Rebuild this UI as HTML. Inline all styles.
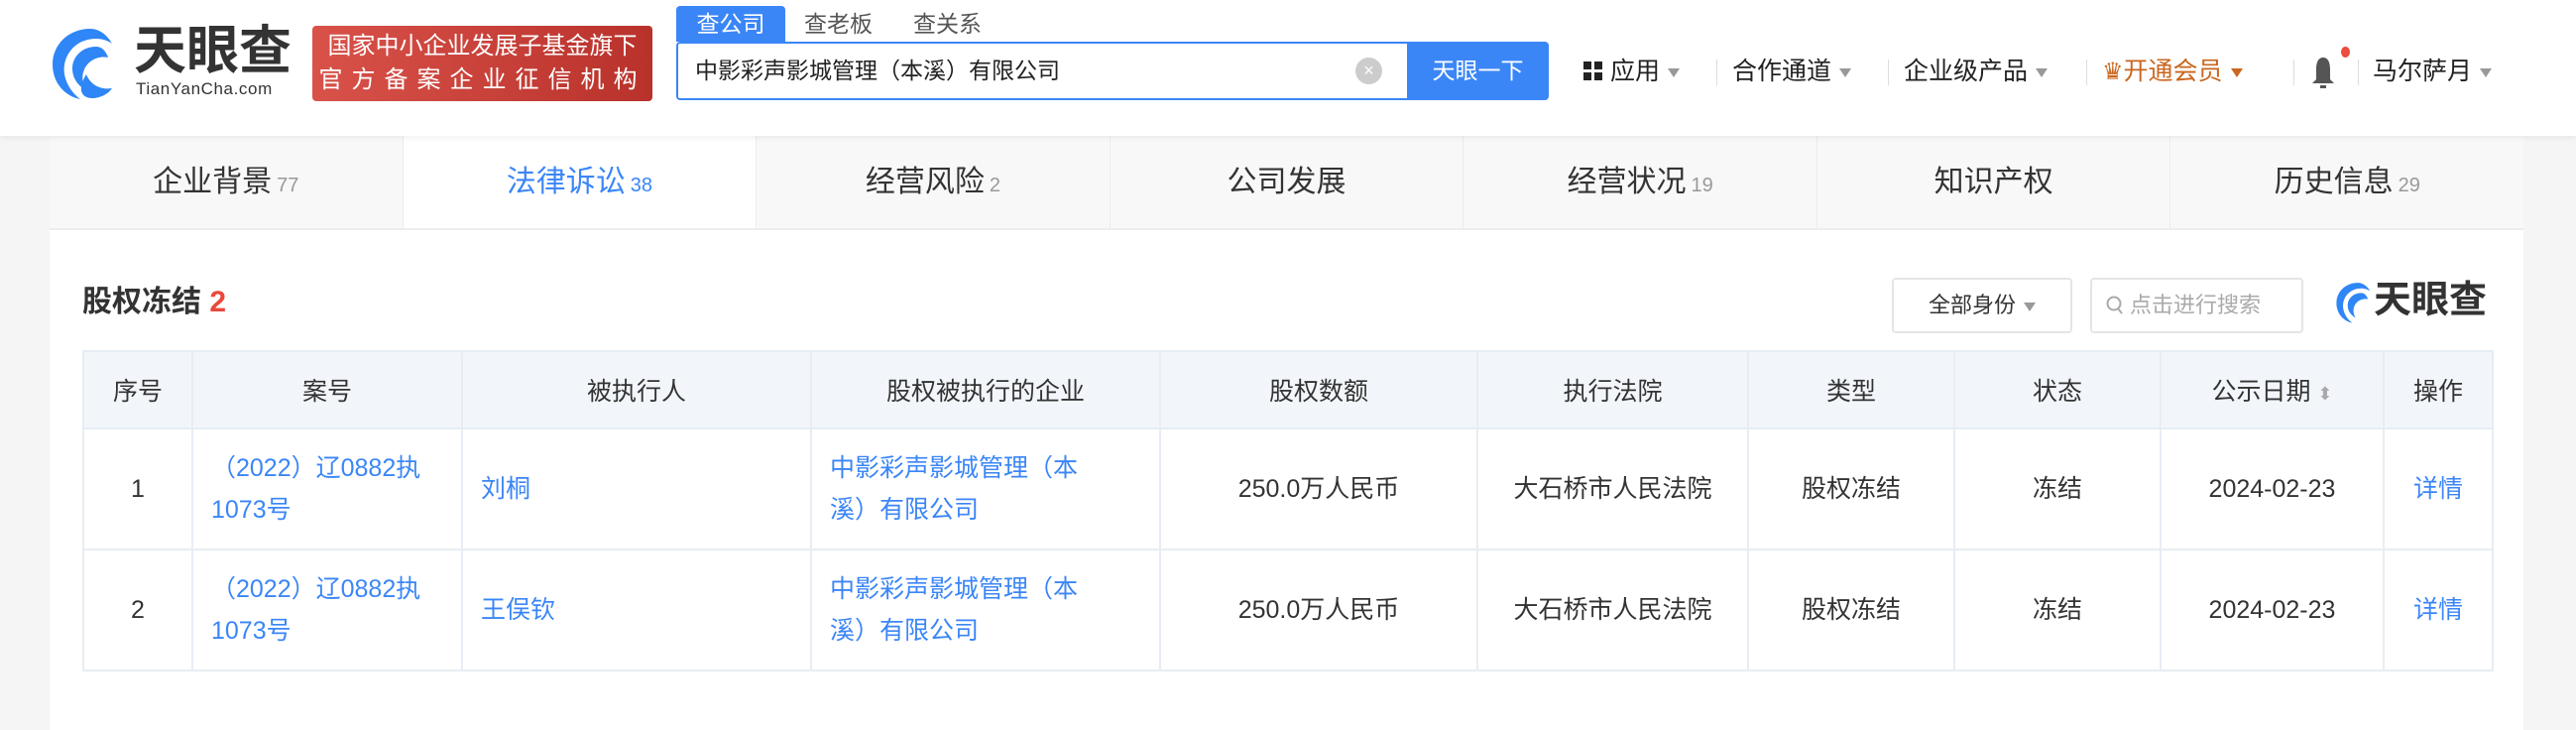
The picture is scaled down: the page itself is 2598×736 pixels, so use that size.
<!DOCTYPE html>
<html><head><meta charset="utf-8">
<style>
*{margin:0;padding:0;box-sizing:border-box}
body{width:2598px;height:736px;overflow:hidden;background:#f5f5f5;font-family:"Liberation Sans","Noto Sans CJK SC",sans-serif;color:#333;position:relative}
.abs{position:absolute}
.hdr{left:0;top:0;width:2598px;height:137px;background:#fff;box-shadow:0 2px 6px rgba(0,0,0,.06);z-index:2}
.badge{left:315px;top:26px;width:343px;height:76px;border-radius:4px;background:linear-gradient(90deg,#d9524a,#b8322b);color:#fff;font-size:24px;line-height:34px;text-align:center;padding-top:4px;white-space:nowrap}
.stab{top:6px;height:36px;font-size:23px;line-height:36px;color:#555}
.sbox{left:682px;top:42px;width:740px;height:59px;border:2px solid #3b86f7;border-right:none;border-radius:4px 0 0 4px;background:#fff;font-size:23px;line-height:55px;padding-left:17px;color:#222}
.sbtn{left:1419px;top:42px;width:143px;height:59px;background:#3b86f7;border-radius:0 4px 4px 0;color:#fff;font-size:23px;line-height:59px;text-align:center}
.nav{top:54px;font-size:25px;line-height:36px;color:#222;white-space:nowrap}
.tri{display:inline-block;width:0;height:0;border-left:6px solid transparent;border-right:6px solid transparent;border-top:9px solid #999;vertical-align:middle;margin-left:8px}
.sep{top:60px;width:1px;height:26px;background:#ddd}
.card{left:50px;top:137px;width:2495px;height:599px;background:#fff}
.tabs{left:50px;top:137px;width:2495px;height:95px;background:#f8f8f8;border-bottom:2px solid #ededed;display:flex}
.tabs div{flex:1;text-align:center;font-size:30px;line-height:93px;color:#333;border-right:1px solid #ececec}
.tabs div.on{background:#fff;color:#3b86f7}
.tabs span{font-size:20px;color:#999;margin-left:5px}
.tabs .on span{color:#3b86f7}
table{position:absolute;left:83px;top:353px;border-collapse:collapse;font-size:25px;width:2432px}
td,th{border:2px solid #e7edf4;text-align:center;font-weight:normal;color:#333}
th{background:#f2f6fa;height:78px}
td{height:122px;line-height:42px}
.l{color:#3b86f7;text-align:left;padding-left:18px}
.b{color:#3b86f7}
</style></head><body>
<div class="abs hdr">
  <svg class="abs" style="left:51px;top:27px" width="66" height="74" viewBox="0 0 66 74">
    <path d="M40 2C18 2 2 18 2 38c0 18 12 32 28 35C18 64 12 50 14 38 17 22 30 12 46 12c6 0 12 2 16 5C57 8 49 2 40 2z" fill="#2f86f6"/>
    <path d="M46 20c-14 0-24 10-24 22 0 10 6 18 14 22-4-6-5-14-2-21 4-9 14-14 24-12-2-6-6-11-12-11z" fill="#2f86f6"/>
    <path d="M36 48c4 10 14 16 26 14-4 6-12 10-20 10-10 0-16-8-6-24z" fill="#2f86f6"/>
  </svg>
  <div class="abs" style="left:135px;top:22px;font-size:53px;font-weight:bold;color:#333;line-height:60px">天眼查</div>
  <div class="abs" style="left:137px;top:80px;font-size:17px;color:#333;line-height:20px;letter-spacing:0.6px">TianYanCha.com</div>
  <div class="abs badge">国家中小企业发展子基金旗下<br><span style="letter-spacing:9px">官方备案企业征信机构</span></div>
  <div class="abs stab" style="left:682px;width:110px;background:#3b86f7;color:#fff;text-align:center;border-radius:4px 4px 0 0">查公司</div>
  <div class="abs stab" style="left:811px">查老板</div>
  <div class="abs stab" style="left:921px">查关系</div>
  <div class="abs sbox">中影彩声影城管理（本溪）有限公司</div>
  <div class="abs" style="left:1367px;top:58px;width:27px;height:27px;border-radius:50%;background:#ccc;color:#fff;font-size:18px;line-height:27px;text-align:center">×</div>
  <div class="abs sbtn">天眼一下</div>
  <div class="abs nav" style="left:1597px"><span style="display:inline-block;width:20px;height:20px;vertical-align:-2px;background:linear-gradient(#222,#222) 0 0/8px 8px no-repeat,linear-gradient(#222,#222) 11px 0/8px 8px no-repeat,linear-gradient(#222,#222) 0 11px/8px 8px no-repeat,linear-gradient(#222,#222) 11px 11px/8px 8px no-repeat"></span> 应用<span class="tri"></span></div>
  <div class="abs sep" style="left:1731px"></div>
  <div class="abs nav" style="left:1747px">合作通道<span class="tri"></span></div>
  <div class="abs sep" style="left:1904px"></div>
  <div class="abs nav" style="left:1920px">企业级产品<span class="tri"></span></div>
  <div class="abs sep" style="left:2104px"></div>
  <div class="abs nav" style="left:2120px;color:#c9661f"><span style="font-size:24px">♛</span>开通会员<span class="tri" style="border-top-color:#c9661f"></span></div>
  <div class="abs sep" style="left:2313px"></div>
  <svg class="abs" style="left:2330px;top:54px" width="26" height="38" viewBox="0 0 26 38"><path d="M13 4c-5 0-7 5-7 12v10l-4 4h22l-4-4V16c0-7-2-12-7-12z" fill="#555"/><rect x="10" y="32" width="6" height="3" fill="#555"/></svg>
  <div class="abs" style="left:2361px;top:47px;width:9px;height:11px;border-radius:50%;background:#ec4d3d"></div>
  <div class="abs sep" style="left:2378px"></div>
  <div class="abs nav" style="left:2393px">马尔萨月<span class="tri"></span></div>
</div>
<div class="abs card"></div>
<div class="abs tabs">
  <div>企业背景<span>77</span></div>
  <div class="on">法律诉讼<span>38</span></div>
  <div>经营风险<span>2</span></div>
  <div>公司发展</div>
  <div>经营状况<span>19</span></div>
  <div>知识产权</div>
  <div style="border-right:none">历史信息<span>29</span></div>
</div>
<div class="abs" style="left:83px;top:284px;font-size:30px;line-height:42px;font-weight:bold;color:#333">股权冻结 <span style="color:#e8493b">2</span></div>
<div class="abs" style="left:1908px;top:280px;width:182px;height:56px;border:2px solid #e5e5e5;border-radius:4px;font-size:22px;line-height:52px;text-align:center;color:#333">全部身份<span class="tri"></span></div>
<div class="abs" style="left:2108px;top:280px;width:215px;height:56px;border:2px solid #e5e5e5;border-radius:4px;font-size:22px;line-height:52px;color:#aaa;padding-left:14px"><svg width="18" height="20" viewBox="0 0 18 20" style="vertical-align:-3px;margin-right:6px"><circle cx="8" cy="8" r="6.5" fill="none" stroke="#aaa" stroke-width="2"/><path d="M12 13l4 5" stroke="#aaa" stroke-width="2"/></svg>点击进行搜索</div>
<svg class="abs" style="left:2355px;top:284px" width="38" height="42" viewBox="0 0 66 74"><path d="M40 2C18 2 2 18 2 38c0 18 12 32 28 35C18 64 12 50 14 38 17 22 30 12 46 12c6 0 12 2 16 5C57 8 49 2 40 2z" fill="#2f86f6"/><path d="M46 20c-14 0-24 10-24 22 0 10 6 18 14 22-4-6-5-14-2-21 4-9 14-14 24-12-2-6-6-11-12-11z" fill="#2f86f6"/></svg>
<div class="abs" style="left:2394px;top:280px;font-size:38px;font-weight:bold;color:#333;line-height:46px">天眼查</div>
<table>
<tr><th style="width:110px">序号</th><th style="width:272px">案号</th><th style="width:352px">被执行人</th><th style="width:352px">股权被执行的企业</th><th style="width:320px">股权数额</th><th style="width:273px">执行法院</th><th style="width:208px">类型</th><th style="width:208px">状态</th><th style="width:225px">公示日期 <span style="color:#aaa;font-size:18px">⬍</span></th><th>操作</th></tr>
<tr><td>1</td><td class="l">（2022）辽0882执<br>1073号</td><td class="l">刘桐</td><td class="l">中影彩声影城管理（本<br>溪）有限公司</td><td>250.0万人民币</td><td>大石桥市人民法院</td><td>股权冻结</td><td>冻结</td><td>2024-02-23</td><td class="b">详情</td></tr>
<tr><td>2</td><td class="l">（2022）辽0882执<br>1073号</td><td class="l">王俣钦</td><td class="l">中影彩声影城管理（本<br>溪）有限公司</td><td>250.0万人民币</td><td>大石桥市人民法院</td><td>股权冻结</td><td>冻结</td><td>2024-02-23</td><td class="b">详情</td></tr>
</table>
</body></html>
